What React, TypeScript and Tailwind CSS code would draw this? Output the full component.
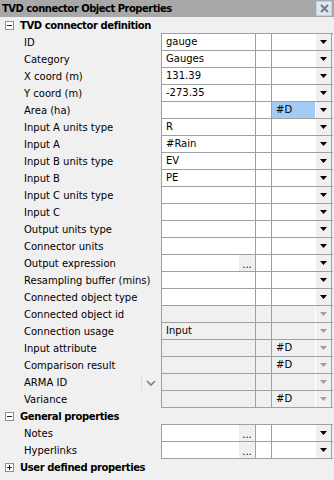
type Row = {
  label: string
  v1?: string
  v3?: string
  selected?: boolean
  dots?: boolean
  ro?: boolean
  chevron?: boolean
}

const DEFINITION: Row[] = [
  { label: 'ID', v1: 'gauge' },
  { label: 'Category', v1: 'Gauges' },
  { label: 'X coord (m)', v1: '131.39' },
  { label: 'Y coord (m)', v1: '-273.35' },
  { label: 'Area (ha)', v3: '#D', selected: true },
  { label: 'Input A units type', v1: 'R' },
  { label: 'Input A', v1: '#Rain' },
  { label: 'Input B units type', v1: 'EV' },
  { label: 'Input B', v1: 'PE' },
  { label: 'Input C units type' },
  { label: 'Input C' },
  { label: 'Output units type' },
  { label: 'Connector units' },
  { label: 'Output expression', dots: true },
  { label: 'Resampling buffer (mins)' },
  { label: 'Connected object type' },
  { label: 'Connected object id', ro: true },
  { label: 'Connection usage', v1: 'Input', ro: true },
  { label: 'Input attribute', v3: '#D', ro: true },
  { label: 'Comparison result', v3: '#D', ro: true },
  { label: 'ARMA ID', ro: true, chevron: true },
  { label: 'Variance', v3: '#D', ro: true },
]

const GENERAL: Row[] = [
  { label: 'Notes', dots: true },
  { label: 'Hyperlinks', dots: true },
]

function Arrow({ disabled }: { disabled?: boolean }) {
  return (
    <svg width="7" height="4" viewBox="0 0 7 4">
      <path d="M0 0h7L3.5 4z" fill={disabled ? '#a0a0a0' : '#000'} />
    </svg>
  )
}

function Box({ plus }: { plus?: boolean }) {
  return (
    <div className="w-[9px] h-[9px] border border-[#919191] bg-white flex items-center justify-center relative flex-shrink-0">
      <div className="w-[5px] h-px bg-[#222]" />
      {plus && <div className="absolute w-px h-[5px] bg-[#222]" />}
    </div>
  )
}

function DotsButton() {
  return (
    <div className="w-[17px] h-full bg-[#f0f0f0] border-l border-white flex items-end justify-center text-[10px] leading-[12px] text-black">
      ...
    </div>
  )
}

function PropRow({ r, first }: { r: Row; first?: boolean }) {
  const cellBg = r.ro ? 'bg-[#f0f0f0]' : 'bg-white'
  return (
    <div className="flex h-[17px]">
      <div className="w-[161px] h-[17px] flex items-center pl-[24px] pr-[4px] text-black">
        <span className="flex-1 whitespace-nowrap">{r.label}</span>
        {r.chevron && (
          <div className="flex items-center gap-[2px] h-full">
            <div className="w-px h-[15px] bg-[#dcdcdc]" />
            <svg width="12" height="8" viewBox="0 0 12 8" className="ml-[1px]">
              <path d="M2 2l4 4 4-4" fill="none" stroke="#808080" strokeWidth="1.6" />
            </svg>
          </div>
        )}
      </div>
      <div className={`flex w-[172px] border-l border-b border-[#a0a0a0] ${first ? 'border-t h-[18px] -mt-px' : 'h-[17px]'}`}>
        <div className={`w-[94px] flex border-r border-[#a0a0a0] ${cellBg}`}>
          <span className="flex-1 pl-[4px] leading-[16px] whitespace-nowrap">{r.v1 ?? ''}</span>
          {r.dots && <DotsButton />}
        </div>
        <div className={`w-[16px] border-r border-[#a0a0a0] ${cellBg}`} />
        <div className={`w-[43px] ${cellBg} flex`}>
          <span className={`flex-1 pl-[4px] leading-[16px] ${r.selected ? 'bg-[#a3cbf3]' : ''}`}>{r.v3 ?? ''}</span>
        </div>
        <div className="w-[17px] bg-[#f0f0f0] border-l border-white border-r border-r-[#a0a0a0] flex items-center justify-center">
          <Arrow disabled={r.ro} />
        </div>
      </div>
    </div>
  )
}

function Section({ title, plus, rows }: { title: string; plus?: boolean; rows?: Row[] }) {
  return (
    <div className="flex flex-col">
      <div className="h-[16px] flex items-center pl-[5px] gap-[6px]">
        <Box plus={plus} />
        <span className="font-bold tracking-[-0.4px] whitespace-nowrap">{title}</span>
      </div>
      {rows && (
        <div className="flex flex-col pt-px">
          {rows.map((r, i) => (
            <PropRow key={r.label} r={r} first={i === 0} />
          ))}
        </div>
      )}
    </div>
  )
}

export default function App() {
  return (
    <div
      className="w-[334px] h-[480px] bg-[#f0f0f0] overflow-hidden flex flex-col text-[10px] text-black"
      style={{ fontFamily: '"DejaVu Sans", Verdana, sans-serif' }}
    >
      {/* Title bar */}
      <div className="h-[17px] bg-[#a8a8a8] flex items-center pl-[2px] pr-[2px] flex-shrink-0">
        <span className="flex-1 font-bold tracking-[-0.5px] whitespace-nowrap">TVD connector Object Properties</span>
        <div className="w-[16px] h-[15px] bg-[#dde7f1] border border-[#c4d2df] flex items-center justify-center">
          <svg width="9" height="9" viewBox="0 0 9 9">
            <path d="M1 1l7 7M8 1L1 8" stroke="#6f7f8e" strokeWidth="2" />
          </svg>
        </div>
      </div>

      <Section title="TVD connector definition" rows={DEFINITION} />
      <Section title="General properties" rows={GENERAL} />
      <Section title="User defined properties" plus />
    </div>
  )
}
